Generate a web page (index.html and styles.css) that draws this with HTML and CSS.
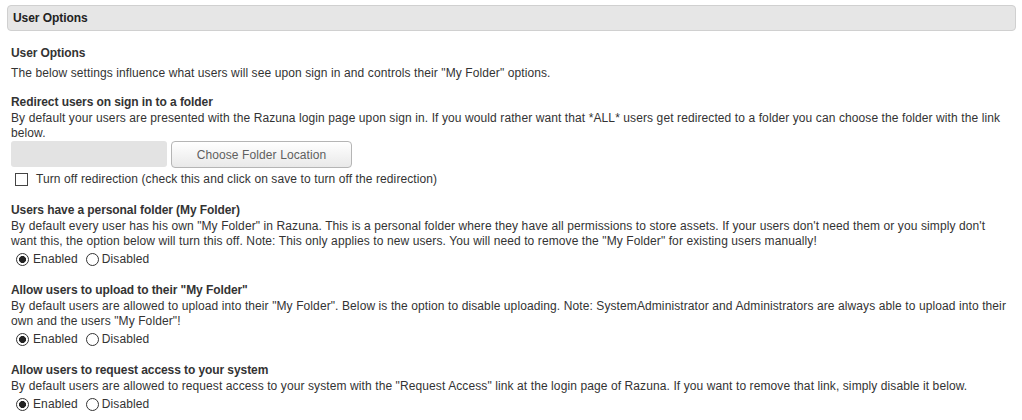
FILE: index.html
```html
<!DOCTYPE html>
<html>
<head>
<meta charset="utf-8">
<link rel="stylesheet" href="styles.css">
</head>
<body>
<div class="panel-head">User Options</div>
<div class="content">
  <div class="intro">
    <div class="heading">User Options</div>
    <div class="text">The below settings influence what users will see upon sign in and controls their "My Folder" options.</div>
  </div>

  <div class="section first">
    <div class="heading">Redirect users on sign in to a folder</div>
    <div class="text">By default your users are presented with the Razuna login page upon sign in. If you would rather want that *ALL* users get redirected to a folder you can choose the folder with the link below.</div>
    <div class="folder-row">
      <input class="folder-input" type="text" disabled>
      <button class="folder-btn" type="button">Choose Folder Location</button>
    </div>
    <label class="check-row"><input type="checkbox" class="cb"><span>Turn off redirection (check this and click on save to turn off the redirection)</span></label>
  </div>

  <div class="section">
    <div class="heading">Users have a personal folder (My Folder)</div>
    <div class="text">By default every user has his own "My Folder" in Razuna. This is a personal folder where they have all permissions to store assets. If your users don't need them or you simply don't want this, the option below will turn this off. Note: This only applies to new users. You will need to remove the "My Folder" for existing users manually!</div>
    <div class="radio-row">
      <label><input type="radio" name="r1" class="rb" checked><span>Enabled</span></label>
      <label><input type="radio" name="r1" class="rb"><span>Disabled</span></label>
    </div>
  </div>

  <div class="section">
    <div class="heading">Allow users to upload to their "My Folder"</div>
    <div class="text">By default users are allowed to upload into their "My Folder". Below is the option to disable uploading. Note: SystemAdministrator and Administrators are always able to upload into their own and the users "My Folder"!</div>
    <div class="radio-row">
      <label><input type="radio" name="r2" class="rb" checked><span>Enabled</span></label>
      <label><input type="radio" name="r2" class="rb"><span>Disabled</span></label>
    </div>
  </div>

  <div class="section">
    <div class="heading">Allow users to request access to your system</div>
    <div class="text">By default users are allowed to request access to your system with the "Request Access" link at the login page of Razuna. If you want to remove that link, simply disable it below.</div>
    <div class="radio-row">
      <label><input type="radio" name="r3" class="rb" checked><span>Enabled</span></label>
      <label><input type="radio" name="r3" class="rb"><span>Disabled</span></label>
    </div>
  </div>
</div>
</body>
</html>
```

FILE: styles.css
```css
html, body {
  margin: 0;
  padding: 0;
  background: #fff;
}
body {
  font-family: "Liberation Sans", Arial, sans-serif;
  font-size: 12px;
  color: #333;
  line-height: 15px;
  letter-spacing: 0.1px;
}
.panel-head {
  margin: 5px 6px 0 7px;
  height: 24px;
  line-height: 24px;
  border: 1px solid #d0d0d0;
  border-radius: 4px;
  background: #e6e6e6;
  padding-left: 5px;
  font-weight: bold;
  color: #222;
  letter-spacing: -0.05px;
}
.content {
  padding: 0 9px 0 11px;
}
.intro {
  padding-top: 15px;
}
.heading {
  font-weight: bold;
  color: #333;
  margin-bottom: 1px;
  letter-spacing: -0.08px;
}
.intro .heading {
  margin-bottom: 5px;
}
.section {
  margin-top: 16px;
}
.section.first {
  margin-top: 14px;
}
.folder-row {
  display: flex;
  gap: 4px;
}
.folder-input {
  width: 156px;
  height: 26px;
  box-sizing: border-box;
  border: none;
  border-radius: 3px;
  background: #e3e3e3;
  margin: 0;
  padding: 0;
}
.folder-btn {
  width: 181px;
  height: 27px;
  box-sizing: border-box;
  border: 1px solid #b5b5b5;
  border-radius: 4px;
  background: linear-gradient(#ffffff, #e9e9e9);
  font-family: "Liberation Sans", Arial, sans-serif;
  font-size: 12px;
  letter-spacing: 0.1px;
  color: #5f5f5f;
  margin: 0;
  padding: 0;
}
.check-row {
  display: flex;
  align-items: center;
  height: 15px;
  margin-top: 4px;
}
.cb {
  appearance: none;
  -webkit-appearance: none;
  width: 13px;
  height: 13px;
  box-sizing: border-box;
  border: 1px solid #444;
  background: #fff;
  margin: 0 8px 0 4px;
}
.radio-row {
  display: flex;
  align-items: center;
  height: 15px;
  margin-top: 3px;
}
.radio-row label {
  display: flex;
  align-items: center;
  margin-right: 8px;
}
.rb {
  appearance: none;
  -webkit-appearance: none;
  width: 13px;
  height: 13px;
  box-sizing: border-box;
  border: 1px solid #333;
  border-radius: 50%;
  background: #fff;
  margin: 0 4px 0 5px;
}
.radio-row label + label .rb {
  margin-left: 0;
  margin-right: 3px;
}
.rb:checked {
  background: radial-gradient(circle, #222 0, #222 3.2px, #fff 3.8px);
}
```
